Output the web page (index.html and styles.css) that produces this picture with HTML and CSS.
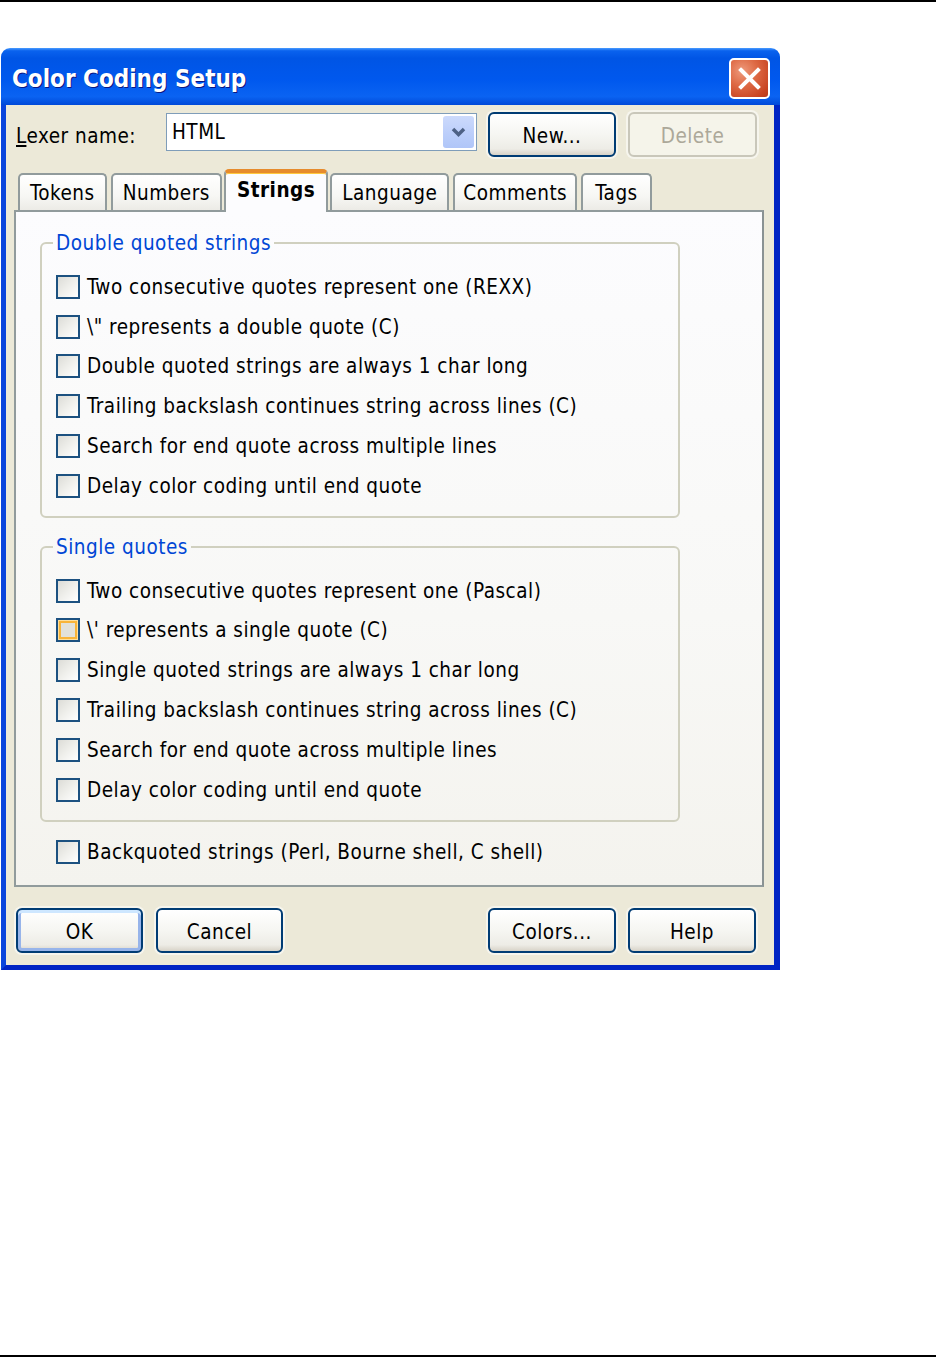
FILE: index.html
```html
<!DOCTYPE html>
<html>
<head>
<meta charset="utf-8">
<title>Color Coding Setup</title>
<link rel="stylesheet" href="styles.css">
</head>
<body>
<div class="page">
  <div class="window">
    <div class="titlebar">
      <span class="title">Color Coding Setup</span>
      <div class="close">
        <svg width="37" height="37" viewBox="0 0 37 37"><path d="M10 10 L27 27 M27 10 L10 27" stroke="#fff" stroke-width="4" stroke-linecap="square" fill="none"/></svg>
      </div>
    </div>
    <div class="client">
      <div class="lexer-row">
        <div class="lexer-label"><u>L</u>exer name:</div>
        <div class="combo">
          <span class="combo-text">HTML</span>
          <span class="combo-btn">
            <svg width="31" height="32" viewBox="0 0 31 32"><path d="M10 13 L15.5 18.5 L21 13" stroke="#4D6185" stroke-width="3.5" fill="none"/></svg>
          </span>
        </div>
        <div class="btn btn-new">New...</div>
        <div class="btn btn-disabled">Delete</div>
      </div>

      <div class="tabs">
        <div class="tab">Tokens</div>
        <div class="tab">Numbers</div>
        <div class="tab tab-active">Strings</div>
        <div class="tab">Language</div>
        <div class="tab tab-narrow">Comments</div>
        <div class="tab tab-wide">Tags</div>
      </div>

      <div class="panel">
        <fieldset class="group">
          <legend>Double quoted strings</legend>
          <div class="check-row"><span class="cb"></span>Two consecutive quotes represent one (REXX)</div>
          <div class="check-row"><span class="cb"></span>\" represents a double quote (C)</div>
          <div class="check-row"><span class="cb"></span>Double quoted strings are always 1 char long</div>
          <div class="check-row"><span class="cb"></span>Trailing backslash continues string across lines (C)</div>
          <div class="check-row"><span class="cb"></span>Search for end quote across multiple lines</div>
          <div class="check-row"><span class="cb"></span>Delay color coding until end quote</div>
        </fieldset>
        <fieldset class="group">
          <legend>Single quotes</legend>
          <div class="check-row"><span class="cb"></span>Two consecutive quotes represent one (Pascal)</div>
          <div class="check-row"><span class="cb cb-hot"></span>\' represents a single quote (C)</div>
          <div class="check-row"><span class="cb"></span>Single quoted strings are always 1 char long</div>
          <div class="check-row"><span class="cb"></span>Trailing backslash continues string across lines (C)</div>
          <div class="check-row"><span class="cb"></span>Search for end quote across multiple lines</div>
          <div class="check-row"><span class="cb"></span>Delay color coding until end quote</div>
        </fieldset>
        <div class="check-row backquote"><span class="cb"></span>Backquoted strings (Perl, Bourne shell, C shell)</div>
      </div>

      <div class="bottom-row">
        <div class="btn btn-default">OK</div>
        <div class="btn btn-cancel">Cancel</div>
        <div class="spacer"></div>
        <div class="btn">Colors...</div>
        <div class="btn btn-help">Help</div>
      </div>
    </div>
  </div>
</div>
</body>
</html>
```

FILE: styles.css
```css
* { box-sizing: border-box; }

body {
  margin: 0;
  background: #fff;
  font-family: "DejaVu Sans Condensed", "DejaVu Sans", sans-serif;
  font-size: 20.5px;
  letter-spacing: 0.5px;
  color: #000;
}

.page {
  height: 1357px;
  border-top: 2px solid #000;
  border-bottom: 2px solid #000;
  padding-top: 46px;
  padding-left: 1px;
}

.window {
  width: 779px;
  height: 922px;
  display: flex;
  flex-direction: column;
}

.titlebar {
  flex: none;
  height: 57px;
  border-radius: 9px 9px 0 0;
  background: linear-gradient(180deg, #4A9CFF 0%, #0A62EE 5%, #0055E5 18%, #0058EE 55%, #0A63F2 85%, #0049D8 100%);
  display: flex;
  justify-content: space-between;
  align-items: flex-start;
  padding: 10px 10px 0 11px;
}

.title {
  color: #fff;
  font-family: "DejaVu Sans Condensed", "DejaVu Sans", sans-serif;
  font-weight: bold;
  font-size: 24px;
  line-height: 43px;
  text-shadow: 1px 1px 0 #0A1883;
  letter-spacing: 0;
}

.close {
  width: 41px;
  height: 41px;
  border: 2px solid #fff;
  border-radius: 5px;
  background: radial-gradient(circle at 30% 30%, #EE9A7C 0%, #DE6A45 40%, #C94522 80%, #B83A18 100%);
  display: flex;
  align-items: center;
  justify-content: center;
}

.client {
  flex: 1;
  background: #ECE9D8;
  border-left: 5px solid #0A45DC;
  border-right: 6px solid #0024C4;
  border-bottom: 5px solid #0024C4;
  padding: 7px 0 0 10px;
}

.lexer-row {
  display: flex;
  align-items: flex-start;
  height: 45px;
}

.lexer-label {
  width: 150px;
  line-height: 45px;
  padding-top: 2px;
}

.combo {
  width: 311px;
  height: 38px;
  margin-top: 1px;
  margin-right: 11px;
  border: 1px solid #7F9DB9;
  background: #fff;
  display: flex;
  align-items: center;
  justify-content: space-between;
  padding-left: 5px;
}

.combo-btn {
  width: 31px;
  height: 32px;
  margin-right: 2px;
  border-radius: 3px;
  background: linear-gradient(180deg, #CCDAFC 0%, #BACDFA 60%, #B0C6F8 100%);
  display: flex;
}

.btn {
  width: 128px;
  height: 45px;
  padding-top: 2px;
  border: 2px solid #003C74;
  border-radius: 6px;
  background: linear-gradient(180deg, #FFFFFF 0%, #F6F6F2 50%, #EDECE6 85%, #D8D3C8 100%);
  display: flex;
  align-items: center;
  justify-content: center;
  box-shadow: 0 0 0 2px rgba(255,255,255,0.55);
  flex: none;
}

.btn-new { margin-right: 12px; }

.btn-disabled {
  width: 129px;
  border-color: #C9C7BA;
  background: #F5F4EA;
  color: #ACA899;
}

.tabs {
  display: flex;
  align-items: flex-end;
  height: 41px;
  margin-top: 12px;
  margin-left: 2px;
  gap: 4px;
}

.tab {
  height: 37px;
  padding: 0 10px;
  border: 2px solid #919B9C;
  border-bottom: none;
  border-radius: 5px 5px 0 0;
  background: linear-gradient(180deg, #FFFFFF 0%, #F7F7F4 60%, #ECEBE6 100%);
  line-height: 36px;
}

.tab-narrow { padding: 0 8px; }
.tab-wide { padding: 0 12px; }

.tab-active {
  position: relative;
  z-index: 1;
  height: 43px;
  margin: 0 -2px -2px;
  padding: 0 11px;
  border-top: 4px solid #E68B2C;
  box-shadow: inset 0 1px 0 #FFC83C;
  background: #FCFCFE;
  font-weight: bold;
  line-height: 34px;
}

.panel {
  width: 750px;
  margin-left: -2px;
  border: 2px solid #919B9C;
  border-right-color: #8A9293;
  background: linear-gradient(180deg, #FCFCFE 0%, #F8F8F6 60%, #F4F3EE 100%);
  padding: 18px 0 13px 24px;
}

.group {
  width: 640px;
  margin: 0;
  border: 2px solid #D0D0BF;
  border-radius: 6px;
  padding: 11px 0 10px 14px;
}

.group + .group { margin-top: 16px; }

.group legend {
  color: #0046D5;
  padding: 0 3px;
  margin-left: -3px;
  line-height: 26px;
}

.check-row {
  display: flex;
  align-items: center;
  height: 39.8px;
  white-space: nowrap;
}

.cb {
  flex: none;
  width: 24px;
  height: 24px;
  margin-right: 7px;
  border: 2px solid #1C5180;
  background: linear-gradient(135deg, #DCDCD7 0%, #EFEFEB 50%, #FFFFFF 100%);
}

.cb-hot {
  background: #E2E1DA;
  box-shadow: inset 0 0 0 1px #FEDF9C, inset 0 0 0 3px #F8B43A;
}

.backquote {
  margin-top: 11px;
  margin-left: 16px;
}

.bottom-row {
  display: flex;
  height: 45px;
  margin-top: 21px;
  margin-right: 18px;
}

.btn-default {
  width: 127px;
  box-shadow: 0 0 0 2px rgba(255,255,255,0.55), inset 0 3px 0 #CEE7FF, inset 0 0 0 3px #97B4EA;
}

.btn-cancel {
  width: 127px;
  margin-left: 13px;
}

.spacer { flex: 1; }

.btn-help { margin-left: 12px; }
```
